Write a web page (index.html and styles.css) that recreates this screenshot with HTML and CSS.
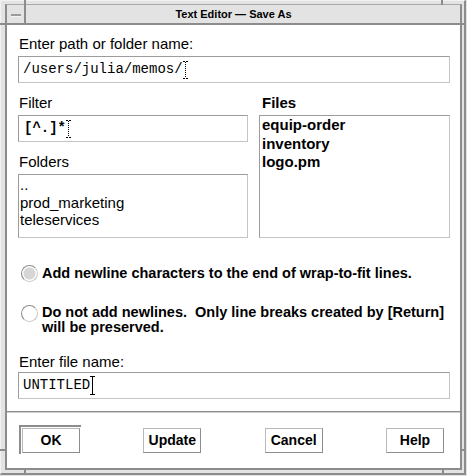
FILE: index.html
```html
<!DOCTYPE html>
<html>
<head>
<meta charset="utf-8">
<link rel="stylesheet" href="styles.css">
</head>
<body>
<div class="window">
  <span class="tick tick-top-l"></span>
  <span class="tick tick-top-r"></span>
  <span class="tick tick-bot-l"></span>
  <span class="tick tick-bot-r"></span>
  <span class="tick tick-left-t"></span>
  <span class="tick tick-left-b"></span>
  <span class="tick tick-right-t"></span>
  <span class="tick tick-right-b"></span>
  <div class="inner">
    <div class="titlebar">
      <div class="menu-btn"><span class="menu-dash"></span></div>
      <div class="title">Text Editor — Save As</div>
    </div>
    <div class="client">
      <div class="main">
        <div class="lbl">Enter path or folder name:</div>
        <div class="field">/users/julia/memos/<svg class="caret" width="5" height="18" viewBox="0 0 5 18"><path d="M0 0.5H2M3 0.5H5M0 17.5H2M3 17.5H5" stroke="#000" stroke-width="1"/><path d="M2.5 1V17" stroke="#000" stroke-width="1" stroke-dasharray="1 1"/></svg></div>
        <div class="cols">
          <div class="col col-left">
            <div class="lbl">Filter</div>
            <div class="field field-bold">[^.]*<svg class="caret" width="5" height="18" viewBox="0 0 5 18"><path d="M0 0.5H2M3 0.5H5M0 17.5H2M3 17.5H5" stroke="#000" stroke-width="1"/><path d="M2.5 1V17" stroke="#000" stroke-width="1" stroke-dasharray="1 1"/></svg></div>
            <div class="lbl lbl-gap">Folders</div>
            <div class="list list-folders">
              <div class="item">..</div>
              <div class="item">prod_marketing</div>
              <div class="item">teleservices</div>
            </div>
          </div>
          <div class="col col-right">
            <div class="lbl lbl-bold">Files</div>
            <div class="list list-files">
              <div class="item">equip-order</div>
              <div class="item">inventory</div>
              <div class="item">logo.pm</div>
            </div>
          </div>
        </div>
        <div class="radio-row radio-first">
          <span class="radio radio-on"></span>
          <span class="radio-text">Add newline characters to the end of wrap-to-fit lines.</span>
        </div>
        <div class="radio-row radio-second">
          <span class="radio"></span>
          <span class="radio-text">Do not add newlines.&nbsp; Only line breaks created by [Return]<br>will be preserved.</span>
        </div>
        <div class="lbl lbl-file">Enter file name:</div>
        <div class="field">UNTITLED<svg class="caret" width="5" height="19" viewBox="0 0 5 19"><path d="M0 0.5H5M0 18.5H5M2.5 1V18" stroke="#000" stroke-width="1"/></svg></div>
      </div>
      <div class="sep"></div>
      <div class="buttons">
        <div class="btn btn-default">OK</div>
        <div class="btn">Update</div>
        <div class="btn">Cancel</div>
        <div class="btn">Help</div>
      </div>
    </div>
  </div>
</div>
</body>
</html>
```
FILE: styles.css
```css
html, body {
  margin: 0;
  padding: 0;
  background: #e3e3e3;
}
body {
  width: 467px;
  height: 476px;
  overflow: hidden;
  font-family: "Liberation Sans", Arial, sans-serif;
  color: #000;
}
.window {
  position: relative;
  width: 466px;
  height: 475px;
  box-sizing: border-box;
  background: #e3e3e3;
  border-left: 1px solid #f2f2f2;
  border-top: 1px solid #f2f2f2;
  border-right: 2px solid #8c8c8c;
  border-bottom: 2px solid #8c8c8c;
  display: flex;
}
.tick {
  position: absolute;
  background: #8c8c8c;
}
.tick-top-l { left: 23px; top: -1px; width: 2px; height: 5px; }
.tick-top-r { left: 440px; top: -1px; width: 2px; height: 5px; }
.tick-bot-l { left: 23px; bottom: -2px; width: 2px; height: 5px; }
.tick-bot-r { left: 441px; bottom: -2px; width: 2px; height: 5px; }
.tick-left-t { left: -1px; top: 22px; width: 5px; height: 2px; }
.tick-left-b { left: -1px; top: 448px; width: 5px; height: 2px; }
.tick-right-t { right: 0; top: 22px; width: 2px; height: 2px; }
.tick-right-b { right: 0; top: 448px; width: 2px; height: 2px; }
.inner {
  flex: 1;
  margin: 3px 2px 3px 4px;
  border-left: 2px solid #8c8c8c;
  border-top: 1px solid #a8a8a8;
  border-right: 2px solid #8c8c8c;
  border-bottom: 2px solid #8c8c8c;
  display: flex;
  flex-direction: column;
}
.titlebar {
  height: 18px;
  border-bottom: 2px solid #8c8c8c;
  display: flex;
  background: #e3e3e3;
}
.menu-btn {
  width: 17px;
  border-right: 2px solid #8c8c8c;
  display: flex;
  align-items: center;
  justify-content: center;
}
.menu-dash {
  width: 10px;
  height: 2px;
  background: #9a9a9a;
  border-bottom: 1px solid #f4f4f4;
  margin-top: 2px;
}
.title {
  flex: 1;
  text-align: center;
  font-weight: bold;
  font-size: 11px;
  line-height: 19px;
  padding-right: 19px;
}
.client {
  flex: 1;
  background: #fff;
  display: flex;
  flex-direction: column;
}
.main {
  flex: 1;
  padding: 11px 10px 0 11px;
}
.lbl {
  font-size: 15px;
  line-height: 16px;
  height: 16px;
  margin-bottom: 4px;
  padding-left: 1px;
}
.lbl-bold {
  font-weight: bold;
  padding-left: 3px;
}
.lbl-gap {
  margin-top: 12px;
}
.field {
  height: 25px;
  border: 1px solid;
  border-color: #9c9c9c #c4c4c4 #c4c4c4 #9c9c9c;
  padding-left: 4px;
  font-family: "Liberation Mono", "Courier New", monospace;
  font-size: 14px;
  line-height: 25px;
  display: flex;
  align-items: center;
  white-space: pre;
}
.field-bold {
  font-weight: bold;
  padding-left: 5px;
}
.caret {
  display: block;
  flex: none;
  margin-left: 0;
}
.cols {
  margin-top: 12px;
  display: flex;
  gap: 11px;
  height: 143px;
}
.col-left {
  width: 230px;
  display: flex;
  flex-direction: column;
}
.col-right {
  flex: 1;
  display: flex;
  flex-direction: column;
}
.list {
  border: 1px solid;
  border-color: #9c9c9c #c4c4c4 #c4c4c4 #9c9c9c;
  font-size: 15px;
  box-sizing: border-box;
}
.list-folders {
  height: 64px;
  padding-left: 1px;
  padding-top: 1px;
  line-height: 17.5px;
}
.list-files {
  height: 123px;
  padding-left: 2px;
  font-weight: bold;
  line-height: 18.5px;
}
.radio-row {
  display: flex;
  align-items: flex-start;
  font-size: 14.5px;
  font-weight: bold;
}
.radio-first {
  margin-top: 27px;
  line-height: 17px;
}
.radio-second {
  margin-top: 23px;
  line-height: 15px;
}
.radio {
  width: 15px;
  height: 15px;
  border-radius: 50%;
  border: 1px solid;
  border-color: #8c8c8c #c8c8c8 #c8c8c8 #8c8c8c;
  margin-left: 3px;
  margin-right: 4px;
  flex: none;
  background: #fff;
}
.radio-on {
  background: radial-gradient(circle, #d6d6d6 0, #d6d6d6 5.5px, #fff 6.5px);
}
.radio-text {
  display: block;
}
.lbl-file {
  margin-top: 19px;
  margin-bottom: 2px;
}
.sep {
  margin-top: 11px;
  height: 1px;
  background: #8c8c8c;
  border-bottom: 1px solid #cfcfcf;
}
.buttons {
  display: flex;
  justify-content: space-between;
  padding: 15px 16px 15px 15px;
}
.btn {
  width: 56px;
  height: 23px;
  border: 1px solid;
  border-color: #b8b8b8 #8c8c8c #8c8c8c #b8b8b8;
  font-size: 14px;
  font-weight: bold;
  line-height: 23px;
  text-align: center;
  background: #fff;
}
.btn-default {
  box-shadow: 0 0 0 1px #fff, -1px -1px 0 2px #8c8c8c;
}
```
